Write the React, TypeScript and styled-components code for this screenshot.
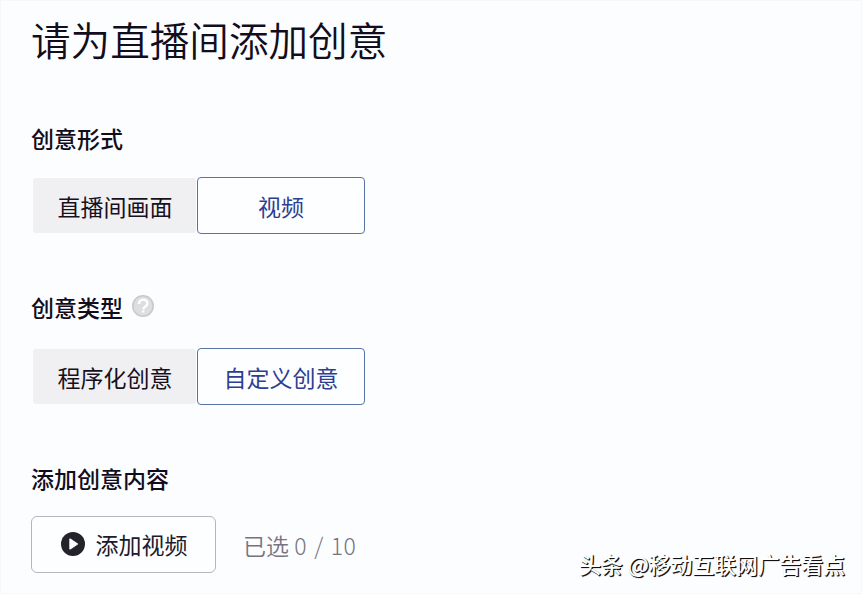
import { useState } from "react"
import styled, { createGlobalStyle } from "styled-components"

const GlobalStyle = createGlobalStyle`
    * {
        box-sizing: border-box;
    }

    body {
        margin: 0;
        background: #fcfdff;
        font-family: "Noto Sans CJK SC", sans-serif;
    }
`

const formats = ["直播间画面", "视频"]
const types = ["程序化创意", "自定义创意"]

export default function App() {
    const [format, setFormat] = useState("视频")
    const [type, setType] = useState("自定义创意")

    return (
        <Page>
            <GlobalStyle />
            <Title>请为直播间添加创意</Title>

            <Section $top={58}>
                <Label>创意形式</Label>
                <Segments>
                    {formats.map(name => (
                        <Segment
                            key={name}
                            $active={name === format}
                            onClick={() => setFormat(name)}>
                            {name}
                        </Segment>
                    ))}
                </Segments>
            </Section>

            <Section $top={57}>
                <Label>
                    创意类型
                    <HelpIcon />
                </Label>
                <Segments $gap={25}>
                    {types.map(name => (
                        <Segment key={name} $active={name === type} onClick={() => setType(name)}>
                            {name}
                        </Segment>
                    ))}
                </Segments>
            </Section>

            <Section $top={57}>
                <Label>添加创意内容</Label>
                <UploadRow>
                    <AddButton>
                        <PlayIcon />
                        添加视频
                    </AddButton>
                    <Count>
                        已选 <Amount>0 / 10</Amount>
                    </Count>
                </UploadRow>
            </Section>

            <Watermark>头条 @移动互联网广告看点</Watermark>
        </Page>
    )
}

const HelpIcon = () => (
    <svg width={24} height={24} viewBox="0 0 24 24" fill="none">
        <circle cx="12" cy="12" r="10.2" fill="#dededf" stroke="#c9c9cb" strokeWidth="1.6" />
        <path
            d="M8 10c0-2.8 1.8-4.4 4.2-4.4s4.2 1.6 4.2 3.8c0 3-3.8 3-4.1 6M12.1 16.6v2"
            stroke="#fff"
            strokeWidth="2.4"
        />
    </svg>
)

const PlayIcon = () => (
    <svg width={24} height={24} viewBox="0 0 24 24">
        <circle cx="12" cy="12" r="12" fill="#25232a" />
        <path
            d="M9 7.2v9.6l7.4-4.8z"
            fill="#fff"
            stroke="#fff"
            strokeWidth="1.4"
            strokeLinejoin="round"
        />
    </svg>
)

const Page = styled.main`
    position: relative;
    height: 594px;
    padding: 13px 30px 0;
    overflow: hidden;
    border: 1px solid #f6f7f9;
    color: #120d1c;
`

const Title = styled.h1`
    margin: 0;
    font-size: 39.6px;
    font-weight: 350;
    line-height: 50px;
`

const Section = styled.section<{ $top: number }>`
    margin-top: ${p => p.$top}px;
`

const Label = styled.h2`
    display: flex;
    align-items: center;
    gap: 8px;
    margin: 0;
    font-size: 23px;
    font-weight: 500;
    line-height: 32px;

    svg {
        margin-top: -2px;
    }
`

const Segments = styled.div<{ $gap?: number }>`
    display: flex;
    margin-top: ${p => p.$gap ?? 23}px;
    padding-left: 1px;
`

const Segment = styled.button<{ $active: boolean }>`
    width: ${p => (p.$active ? 168 : 165)}px;
    height: 57px;
    padding: ${p => (p.$active ? 0 : "0 0 0 1px")};
    border: 1px solid ${p => (p.$active ? "#5874a6" : "transparent")};
    border-radius: 4px;
    background: ${p => (p.$active ? "#fdfeff" : "#f0f0f2")};
    background-clip: padding-box;
    color: ${p => (p.$active ? "#2e3e91" : "#17101f")};
    font-family: inherit;
    font-size: 23px;
`

const UploadRow = styled.div`
    display: flex;
    align-items: center;
    gap: 27px;
    margin-top: 22px;
`

const AddButton = styled.button`
    display: flex;
    align-items: center;
    justify-content: center;
    gap: 11px;
    width: 185px;
    height: 57px;
    padding: 0 0 1px 1px;
    border: 1px solid #b5b5bb;
    border-radius: 6px;
    background: #fdfeff;
    color: #201a2b;
    font-family: inherit;
    font-size: 23px;
`

const Count = styled.span`
    color: #77747e;
    font-size: 23px;
    font-weight: 350;
`

const Amount = styled.span`
    font-weight: 300;
    letter-spacing: 0.3px;
    word-spacing: 2px;
`

const Watermark = styled.div`
    position: absolute;
    right: 16px;
    bottom: 13px;
    color: #fff;
    font-size: 21.8px;
    font-weight: 500;
    line-height: 32px;
    text-shadow:
        1px 1px 0 #111,
        1px 1px 1px #111;
`
